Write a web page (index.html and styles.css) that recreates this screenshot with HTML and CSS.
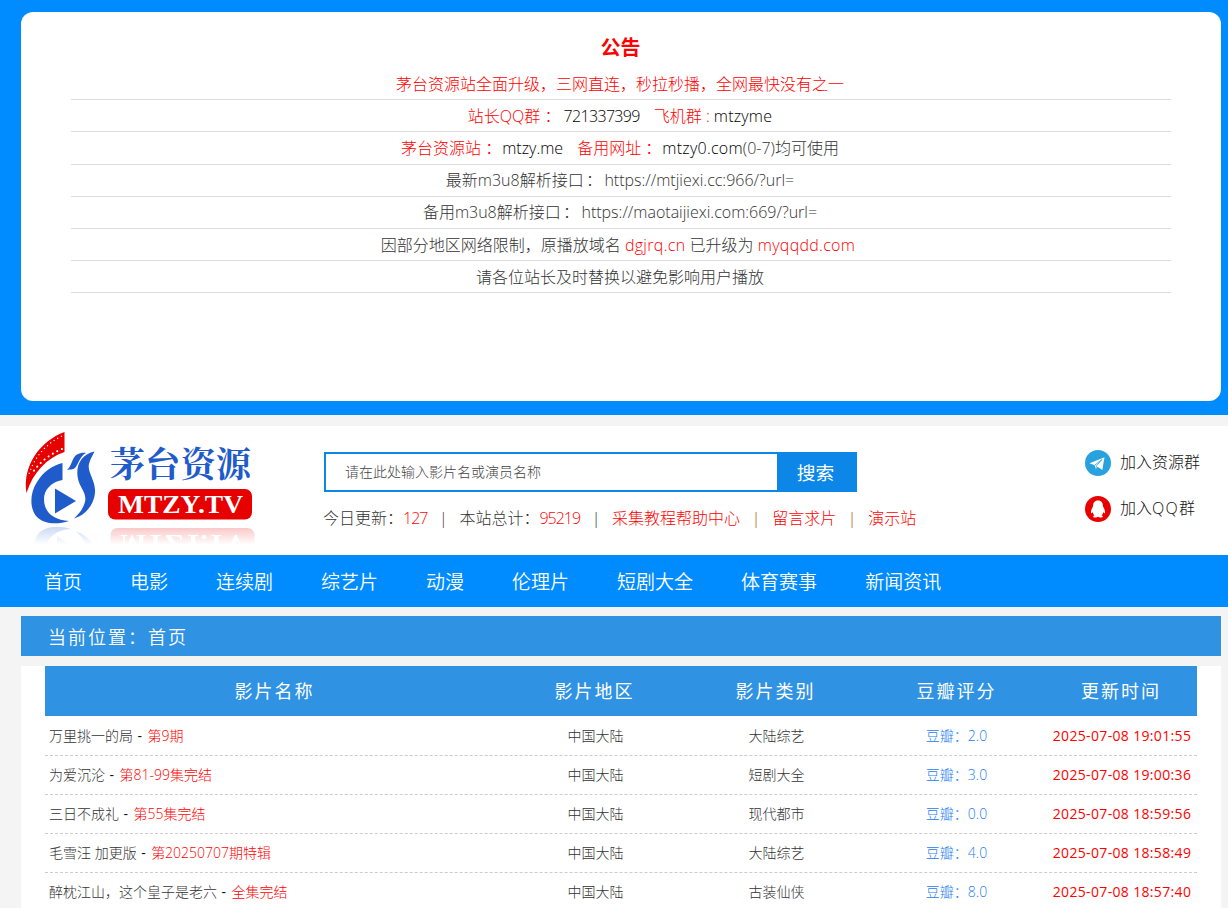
FILE: index.html
```
<!DOCTYPE html>
<html lang="zh-CN">
<head>
<meta charset="utf-8">
<title>茅台资源</title>
<link rel="stylesheet" href="styles.css">
</head>
<body>
<section class="notice-wrap">
  <div class="notice">
    <h1>公告</h1>
    <p class="red">茅台资源站全面升级，三网直连，秒拉秒播，全网最快没有之一</p>
    <p><span class="red">站长QQ群&nbsp;：</span><b class="n1">721337399</b><span class="red">飞机群 :</span><b class="n2">mtzyme</b></p>
    <p><span class="red">茅台资源站&nbsp;：</span><b class="n3">mtzy.me</b><span class="red">备用网址&nbsp;：</span><b class="n4">mtzy0.com</b>(0-7)均可使用</p>
    <p class="api">最新m3u8解析接口&nbsp;： https://mtjiexi.cc:966/?url=</p>
    <p class="api">备用m3u8解析接口&nbsp;： https://maotaijiexi.com:669/?url=</p>
    <p class="domains">因部分地区网络限制，原播放域名 <span class="red">dgjrq.cn</span> 已升级为 <span class="red">myqqdd.com</span></p>
    <p>请各位站长及时替换以避免影响用户播放</p>
  </div>
</section>

<header class="header">
  <svg class="logo" viewBox="20 426 240 122" width="240" height="122">
    <defs>
      <linearGradient id="fade" gradientUnits="userSpaceOnUse" x1="0" y1="526" x2="0" y2="545">
        <stop offset="0" stop-color="#fff" stop-opacity=".24"/>
        <stop offset="1" stop-color="#fff" stop-opacity="0"/>
      </linearGradient>
      <mask id="mirror" maskUnits="userSpaceOnUse" x="20" y="527" width="240" height="20"><rect x="20" y="527" width="240" height="20" fill="url(#fade)"/></mask>
      <g id="bird">
        <path fill="#e60000" d="M64.500 432C40 441 22 466 26.500 493C33 472 47 458 64.500 452Z"/>
        <path d="M62 436C46 444 35 456 29 474" fill="none" stroke="#fff" stroke-width="1.200" stroke-dasharray="1.200 3"/>
        <path d="M62 449C50 454 40 462 33 472" fill="none" stroke="#fff" stroke-width="2" stroke-linecap="round" stroke-dasharray=".1 5"/>
        <path fill="#1f5bcb" d="M62.500 463V480C51 482 44 490 44 499C44 512 53 520 69 521C57 525 44 524 37 517C30 510 29 494 37 482C43 472 53 465 62.500 463ZM55 488.500L76 501L55 513.500ZM67 470C72 466 72 457 77 454.500C80 453 83 452.500 86 453C80 456 79 463 75 468C73 470 70 469 67 470ZM94.500 451.500C82 454 75 465 78 479C80 488 87 493 85 502C83 509 79 514 74 518.500C86 515 94 504 95 493C96 481 87 472 89 464C90 459 93 455 94.500 451.500Z"/>
      </g>
      <g id="badge">
        <rect x="108" y="489" width="144" height="30.500" rx="7" fill="#e60000"/>
        <text x="118" y="513" textLength="125" lengthAdjust="spacingAndGlyphs" class="logo-en">MTZY.TV</text>
      </g>
    </defs>
    <use href="#bird"/>
    <text x="110" y="477" textLength="141" class="logo-cn">茅台资源</text>
    <use href="#badge"/>
    <g mask="url(#mirror)">
      <use href="#bird" transform="matrix(1 0 0 -1 2 1050)"/>
      <use href="#badge" transform="matrix(1 0 0 -1 2.500 1047.500)"/>
    </g>
  </svg>
  <div class="middle">
    <form class="search">
      <input type="text" placeholder="请在此处输入影片名或演员名称">
      <button type="button">搜索</button>
    </form>
    <div class="stats">
      <span>今日更新：<i class="red">127</i></span><em>|</em>
      <span>本站总计：<i class="red">95219</i></span><em>|</em>
      <a>采集教程帮助中心</a><em class="brown">|</em>
      <a>留言求片</a><em class="brown">|</em>
      <a>演示站</a>
    </div>
  </div>
  <div class="groups">
    <a><svg viewBox="0 0 26 26" width="26" height="26"><circle cx="13" cy="13" r="13" fill="#27a2df"/><path fill="#fff" d="M4.500 13.300L19.500 7.200L17.300 20L12.500 16.800L10.600 19.500L9.700 15.200Z"/><path fill="none" stroke="#27a2df" stroke-width=".8" d="M9.700 15.200L17 9.500L11.500 15.800L10.600 19"/></svg><span>加入资源群</span></a>
    <a><svg viewBox="0 0 26 26" width="26" height="26"><circle cx="13" cy="13" r="13" fill="#ea0000"/><path fill="#fff" d="M13 4.500C9.500 4.500 8 7 8 10.500C6.500 13 5.500 15.500 6.200 17.300C7 17.300 7.500 16.500 7.800 16C8 17.500 8.500 18.500 9.500 19.300C7.500 20 8 21.500 10 21.500C11.500 21.500 12.500 21 13 20.700C13.500 21 14.500 21.500 16 21.500C18 21.500 18.500 20 16.500 19.300C17.500 18.500 18 17.500 18.200 16C18.500 16.500 19 17.300 19.800 17.300C20.500 15.500 19.500 13 18 10.500C18 7 16.500 4.500 13 4.500Z"/></svg><span>加入<b class="qq">QQ</b>群</span></a>
  </div>
</header>

<nav class="nav"><a>首页</a><a>电影</a><a>连续剧</a><a>综艺片</a><a>动漫</a><a>伦理片</a><a>短剧大全</a><a>体育赛事</a><a>新闻资讯</a></nav>

<div class="crumb">当前位置：首页</div>

<main class="panel">
  <div class="row head"><span>影片名称</span><span>影片地区</span><span>影片类别</span><span>豆瓣评分</span><span>更新时间</span></div>
  <div class="row"><span class="name">万里挑一的局<b> - </b><i>第9期</i></span><span>中国大陆</span><span>大陆综艺</span><span class="score">豆瓣：2.0</span><span class="time">2025-07-08 19:01:55</span></div>
  <div class="row"><span class="name">为爱沉沦<b> - </b><i>第81-99集完结</i></span><span>中国大陆</span><span>短剧大全</span><span class="score">豆瓣：3.0</span><span class="time">2025-07-08 19:00:36</span></div>
  <div class="row"><span class="name">三日不成礼<b> - </b><i>第55集完结</i></span><span>中国大陆</span><span>现代都市</span><span class="score">豆瓣：0.0</span><span class="time">2025-07-08 18:59:56</span></div>
  <div class="row"><span class="name">毛雪汪 加更版<b> - </b><i>第20250707期特辑</i></span><span>中国大陆</span><span>大陆综艺</span><span class="score">豆瓣：4.0</span><span class="time">2025-07-08 18:58:49</span></div>
  <div class="row"><span class="name">醉枕江山，这个皇子是老六<b> - </b><i>全集完结</i></span><span>中国大陆</span><span>古装仙侠</span><span class="score">豆瓣：8.0</span><span class="time">2025-07-08 18:57:40</span></div>
</main>
</body>
</html>
```
FILE: styles.css
```
* { box-sizing: border-box; }
body {
  margin: 0;
  background: #f4f4f4;
  font: 300 16px "Open Sans", "Noto Sans CJK SC", sans-serif;
  color: #333;
}
i, em, b { font-style: normal; font-weight: inherit; }
.red { color: #ff0000; }

.notice-wrap { height: 415px; padding: 12px 7px 14px 21px; background: #008cff; }
.notice { height: 389px; padding: 19px 50px 0; background: #fff; border-radius: 12px; text-align: center; }
.notice h1 { margin: 0 0 4px; height: 33px; padding-right: 1px; line-height: 34px; font-size: 20px; font-weight: 700; color: #ff0000; }
.notice p { margin: 0; height: 32.200px; padding-right: 2px; line-height: 32px; border-bottom: 1px solid #ddd; white-space: nowrap; }
.notice p.api { line-height: 31px; }
.notice b { color: #000; }
.n2 { margin-left: 4px; }
.n1 { margin: 0 14px 0 3px; letter-spacing: -.65px; }
.notice .n2 { letter-spacing: .2px; }
.n3 { margin: 0 14px 0 1px; }
.notice .n4 { margin-left: 1px; letter-spacing: .25px; }
.api { word-spacing: -1.800px; }
.notice .domains { padding-right: 6px; }
.domains .red { letter-spacing: .3px; }

.header { display: flex; height: 129px; margin-top: 11px; background: #fff; }
.logo { flex: none; margin-left: 20px; }
.logo-cn { font: 700 35px "Noto Serif CJK SC", "Noto Sans CJK SC", serif; fill: #1f5bcb; }
.logo-en { font: 700 25px "Liberation Serif", serif; fill: #fff; }
.middle { width: 700px; margin-left: 64px; padding-top: 26px; }
.search { display: flex; width: 533px; height: 40px; }
.search input { flex: 1; min-width: 0; padding: 0 19px 2px; border: 2px solid #0c87e8; border-right-width: 1px; background: #fff; font: 300 14px "Open Sans", "Noto Sans CJK SC", sans-serif; }
.search input::placeholder { color: #444; }
.search button { width: 79px; padding: 0 4px 2px 0; border: 0; background: #0c87e8; color: #fff; font: 400 18.700px "Noto Sans CJK SC", sans-serif; }
.stats { display: flex; height: 24px; margin: 14px 0 0 -1px; line-height: 24px; white-space: nowrap; }
.stats i { letter-spacing: -1px; }
.stats em { width: 32px; text-align: center; }
.stats a { color: #ff0000; }
.stats .brown { color: #b05000; }
.groups { display: flex; flex-direction: column; gap: 20px; margin-left: 61px; padding-top: 24px; color: #111; white-space: nowrap; }
.groups a { display: flex; height: 26px; align-items: center; gap: 9px; line-height: 24px; }
.groups svg { flex: none; }
.groups span { padding-bottom: 3px; }
.qq { letter-spacing: 1.200px; }

.nav { display: flex; gap: 48px; height: 52px; padding-left: 44px; line-height: 54px; background: #008cff; color: #fff; font-size: 19px; font-weight: 350; }
.crumb { height: 40px; margin: 9px 7px 10px 21px; padding-left: 27px; line-height: 42px; background: #2f92e2; color: #fff; font-size: 18px; font-weight: 350; letter-spacing: 2px; }
.panel { height: 242px; overflow: hidden; margin: 0 7px 0 21px; padding: 0 24px; background: #fff; }
.row { display: grid; grid-template-columns: 458px 182px 180px 182px 150px; height: 39px; line-height: 38px; border-bottom: 1px dashed #ccc; font-size: 14px; text-align: center; white-space: nowrap; }
.row span { padding-left: 3px; }
.row .name { padding-left: 4px; text-align: left; }
.name b { font-weight: 400; letter-spacing: .9px; color: #111; }
.name i { color: #ff0000; }
.row .score { padding-left: 1px; color: #1e80f0; }
.row .time { padding: 0; color: #ff0000; font-weight: 400; letter-spacing: .34px; }
.row.head { height: 50px; margin-bottom: 1px; line-height: 51px; border: 0; background: #2f92e2; color: #fff; font-size: 18px; font-weight: 400; letter-spacing: 2px; }
.row.head span { padding: 0 0 0 1px; }
.row.head span:last-child { padding: 0 2px 0 0; }
```
